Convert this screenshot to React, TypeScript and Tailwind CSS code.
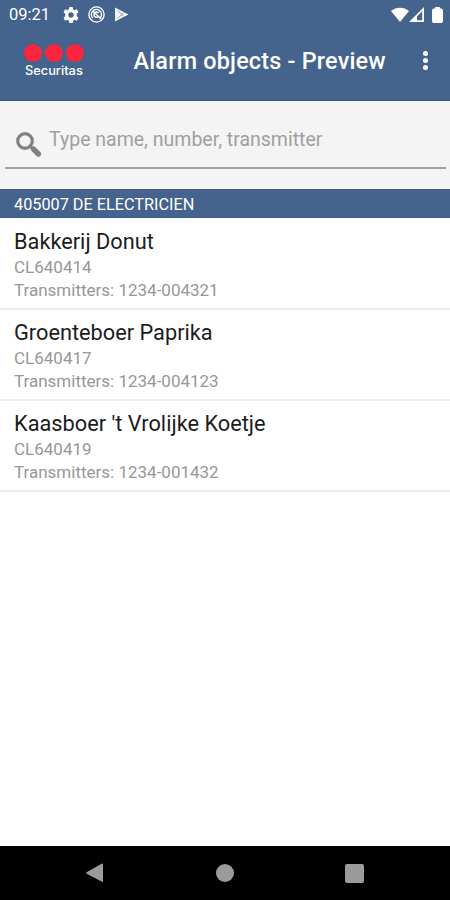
const objects = [
  { name: 'Bakkerij Donut', code: 'CL640414', transmitters: '1234-004321' },
  { name: 'Groenteboer Paprika', code: 'CL640417', transmitters: '1234-004123' },
  { name: "Kaasboer 't Vrolijke Koetje", code: 'CL640419', transmitters: '1234-001432' },
]

export default function App() {
  return (
    <div className="flex h-[900px] w-[450px] flex-col overflow-hidden bg-white font-[Roboto,sans-serif]">
      <header className="flex h-[101px] shrink-0 flex-col border-b border-[#345784] bg-[#44638d] text-white">
        <StatusBar />
        <AppBar />
      </header>
      <SearchField />

      {/* Alarm objects */}
      <main className="flex-1">
        <h2 className="flex h-[29px] items-center border-y border-[#365985] bg-[#44638d] pt-[3px] pl-3.5 text-[16.25px] text-white">
          405007 DE ELECTRICIEN
        </h2>
        <ul className="pt-[0.6px]">
          {objects.map(o => (
            <li key={o.code} className="h-[91.2px] border-b-2 border-[#ececec] pt-[9px] pl-3.5">
              <div className="text-[21.75px] leading-7 text-[#1c1c1c]">{o.name}</div>
              <div className="text-[17px] leading-[23px] text-[#979797]">{o.code}</div>
              <div className="text-[17px] leading-[23px] text-[#979797]">
                Transmitters: {o.transmitters}
              </div>
            </li>
          ))}
        </ul>
      </main>

      <NavigationBar />
    </div>
  )
}

function StatusBar() {
  return (
    <div className="flex h-[29px] items-center pr-[7px] pl-[9px]">
      <span className="w-[54px] pt-px text-[16.5px]">09:21</span>
      <svg className="h-4 w-4" viewBox="0 0 24 24" fill="currentColor">
        <path
          fillRule="evenodd"
          d="M9.5 0h5l.6 3.3 2.4 1.4 3.2-1.2 2.5 4.3-2.6 2.2v4l2.6 2.2-2.5 4.3-3.2-1.2-2.4 1.4-.6 3.3h-5l-.6-3.3-2.4-1.4-3.2 1.2-2.5-4.3L3.4 14v-4L.8 7.8l2.5-4.3 3.2 1.2 2.4-1.4zM12 8a4 4 0 100 8 4 4 0 000-8z"
        />
      </svg>
      <svg className="ml-[9px] h-[17px] w-[17px]" viewBox="0 0 17 17" fill="none" stroke="currentColor">
        <circle cx="8.5" cy="8.5" r="7.6" strokeWidth="1.4" />
        <path strokeWidth="1.5" d="M5 12.2a5 5 0 1 1 7.3-.5M4.5 4.5l8.5 8.5M10.2 10.6A2.6 2.6 0 1 1 10.6 7" />
      </svg>
      <svg className="ml-[9px] h-[15px] w-[15px]" viewBox="0 0 15 15">
        <path d="M1 .5v14L14.5 7.5z" fill="#f4f6f8" />
        <path d="M4 3.5l5.5 6M4 11.5l5.5-6" stroke="#8799b2" strokeWidth="1" />
      </svg>
      <div className="ml-auto flex items-center">
        <svg className="h-[15px] w-[18px]" viewBox="0 0 18 15" fill="currentColor">
          <path d="M0 4C5-.5 13-.5 18 4L9 15z" />
        </svg>
        <svg className="h-[15px] w-[15px]" viewBox="0 0 15 15" fill="currentColor">
          <path fillRule="evenodd" d="M15 0v15H0zM13.2 4.2L8 9.4v3.9h5.2z" />
        </svg>
        <svg className="ml-2 h-4 w-[11px]" viewBox="0 0 11 16" fill="currentColor">
          <path d="M3.2 0h4.6v1.6H9.6L11 3v11.8L9.8 16H1.2L0 14.8V3l1.4-1.4h1.8z" />
        </svg>
      </div>
    </div>
  )
}

function AppBar() {
  return (
    <div className="flex items-start pl-6">
      <div className="w-[109.5px] pt-[15px]">
        <div className="flex gap-[3px]">
          <span className="h-[18px] w-[18px] rounded-full bg-[#fc253f]" />
          <span className="h-[18px] w-[18px] rounded-full bg-[#fc253f]" />
          <span className="h-[18px] w-[18px] rounded-full bg-[#fc253f]" />
        </div>
        <div className="pl-px font-[Inter,sans-serif] text-[12.8px] leading-[17px] font-medium">
          Securitas
        </div>
      </div>
      <h1 className="pt-4 text-[23.4px] leading-8 font-medium tracking-[0.2px] whitespace-nowrap">
        Alarm objects - Preview
      </h1>
      <div className="mt-[22px] mr-[22.5px] ml-auto flex flex-col gap-[2px]">
        <span className="h-[5px] w-[5px] rounded-full bg-white" />
        <span className="h-[5px] w-[5px] rounded-full bg-white" />
        <span className="h-[5px] w-[5px] rounded-full bg-white" />
      </div>
    </div>
  )
}

function SearchField() {
  return (
    <div className="h-[88px] shrink-0 bg-[#f4f4f4] pr-1 pl-[5px]">
      <div className="flex h-[68px] items-start border-b-2 border-[#a3a3a3] pl-[11px]">
        <svg className="mt-[31px] h-[26px] w-[26px]" viewBox="0 0 26 26" fill="none" stroke="#808080">
          <circle cx="9" cy="9" r="7.3" strokeWidth="3.2" />
          <path d="M13.8 13.8l4 4" strokeWidth="3" />
          <path d="M17.6 17.2l4.8 4.8" strokeWidth="5.4" strokeLinecap="round" />
        </svg>
        <input
          className="mt-[25px] ml-[7px] h-7 flex-1 bg-transparent text-[19.5px] outline-none placeholder:text-[#a0a0a0]"
          placeholder="Type name, number, transmitter"
        />
      </div>
    </div>
  )
}

function NavigationBar() {
  return (
    <nav className="flex h-[54px] shrink-0 items-center justify-between bg-black pr-[86px] pl-[86px]">
      <svg className="h-5 w-[18px]" viewBox="0 0 18 20" fill="#9b9b9b">
        <path d="M17 .8v18.4L.6 10.8q-1-.8 0-1.6L15.6.8Q16.8.2 17 .8z" />
      </svg>
      <span className="h-[18px] w-[18px] rounded-full bg-[#9b9b9b]" />
      <span className="h-[19px] w-[19px] rounded-[2px] bg-[#9b9b9b]" />
    </nav>
  )
}
